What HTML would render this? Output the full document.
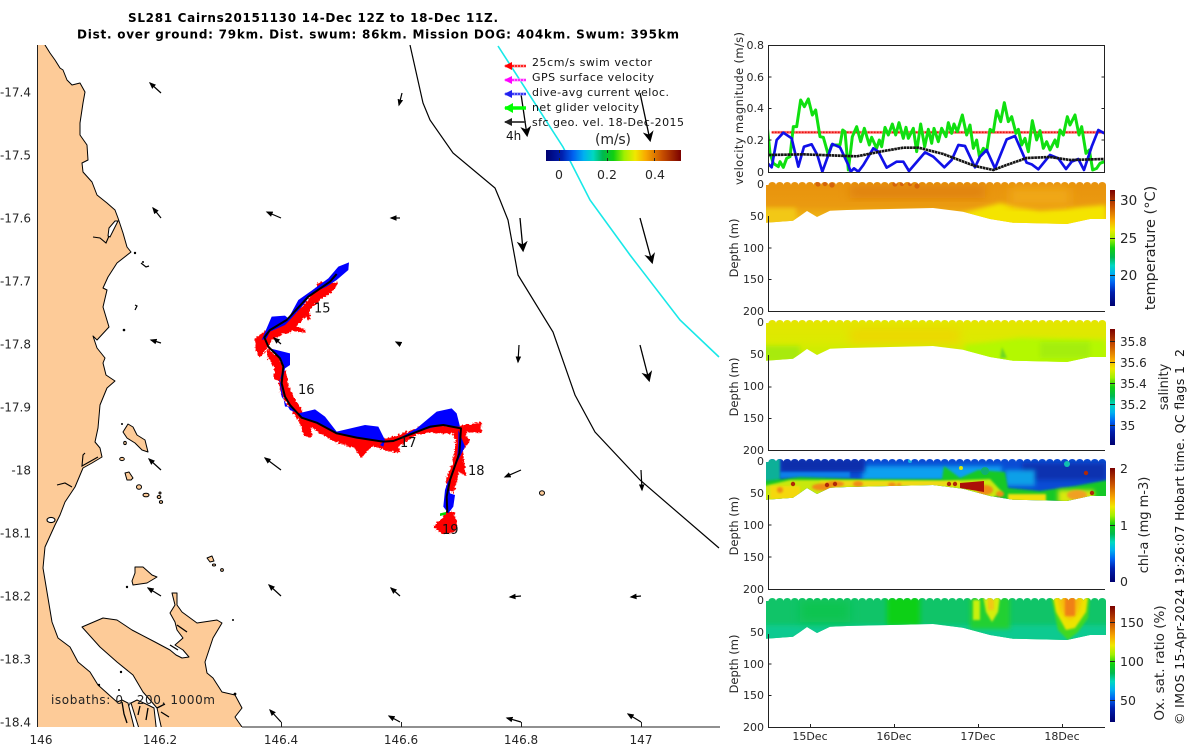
<!DOCTYPE html>
<html><head><meta charset="utf-8"><title>SL281 Cairns20151130</title>
<style>
html,body{margin:0;padding:0;background:#fff}
svg{display:block}
text{font-family:"DejaVu Sans","Liberation Sans",sans-serif;fill:#262626}
.t{font-size:12px}
.s{font-size:11px}
.c{font-size:13.5px}
.l{font-size:11px;fill:#111}
</style></head><body>
<svg xmlns="http://www.w3.org/2000/svg" width="1200" height="750" viewBox="0 0 1200 750">
<defs>
<marker id="a" viewBox="0 0 10 10" refX="8" refY="5" markerWidth="7" markerHeight="7" orient="auto" markerUnits="userSpaceOnUse"><path d="M0,1 L10,5 L0,9 Z" fill="#000"/></marker>
<marker id="b" viewBox="0 0 10 10" refX="8" refY="5" markerWidth="13" markerHeight="11" orient="auto" markerUnits="userSpaceOnUse"><path d="M0,0 L10,5 L0,10 L3,5 Z" fill="#000"/></marker>
<linearGradient id="cm" x1="0" x2="1" y1="0" y2="0">
<stop offset="0" stop-color="#000070"/><stop offset=".12" stop-color="#0020b0"/><stop offset=".2" stop-color="#0060f0"/><stop offset=".28" stop-color="#00b0f0"/><stop offset=".35" stop-color="#00d8c0"/><stop offset=".42" stop-color="#00b850"/><stop offset=".5" stop-color="#10d010"/><stop offset=".58" stop-color="#a0f000"/><stop offset=".66" stop-color="#f0e800"/><stop offset=".74" stop-color="#f8a800"/><stop offset=".86" stop-color="#c85000"/><stop offset="1" stop-color="#7a0000"/>
</linearGradient>
<linearGradient id="cv" x1="0" x2="0" y1="1" y2="0">
<stop offset="0" stop-color="#000070"/><stop offset=".12" stop-color="#0020b0"/><stop offset=".2" stop-color="#0060f0"/><stop offset=".28" stop-color="#00b0f0"/><stop offset=".35" stop-color="#00d8c0"/><stop offset=".42" stop-color="#00b850"/><stop offset=".5" stop-color="#10d010"/><stop offset=".58" stop-color="#a0f000"/><stop offset=".66" stop-color="#f0e800"/><stop offset=".74" stop-color="#f8a800"/><stop offset=".86" stop-color="#c85000"/><stop offset="1" stop-color="#7a0000"/>
</linearGradient>
<linearGradient id="g2" x1="0" x2="0" y1="0" y2="1"><stop offset="0" stop-color="#e8910c"/><stop offset=".55" stop-color="#ea9a10"/><stop offset=".8" stop-color="#f0b612"/><stop offset="1" stop-color="#f2d010"/></linearGradient>
<linearGradient id="g3" x1="0" x2="0" y1="0" y2="1"><stop offset="0" stop-color="#e6e400"/><stop offset=".5" stop-color="#dcea00"/><stop offset="1" stop-color="#b8f200"/></linearGradient>
<filter id="f1" x="-30%" y="-30%" width="160%" height="160%"><feGaussianBlur stdDeviation="1"/></filter>
<filter id="f2" x="-30%" y="-30%" width="160%" height="160%"><feGaussianBlur stdDeviation="2.5"/></filter>
<filter id="f3" x="-30%" y="-30%" width="160%" height="160%"><feGaussianBlur stdDeviation="5"/></filter>
<filter id="rough" x="-10%" y="-10%" width="120%" height="120%"><feTurbulence type="fractalNoise" baseFrequency="0.15" numOctaves="2" seed="4" result="n"/><feDisplacementMap in="SourceGraphic" in2="n" scale="14" xChannelSelector="R" yChannelSelector="G"/></filter>
<path id="ds" d="M766,222.7 L793,220.7 L800,216 L807,211 L817,217 L830,210.7 L847,210 L933,208 L963,211.7 L990,219 L1013,222.7 L1067,224 L1090,219 L1106,219 L1106,185 a3.75,3 0 0 0 -7.5,0 a3.75,3 0 0 0 -7.5,0 a3.75,3 0 0 0 -7.5,0 a3.75,3 0 0 0 -7.5,0 a3.75,3 0 0 0 -7.5,0 a3.75,3 0 0 0 -7.5,0 a3.75,3 0 0 0 -7.5,0 a3.75,3 0 0 0 -7.5,0 a3.75,3 0 0 0 -7.5,0 a3.75,3 0 0 0 -7.5,0 a3.75,3 0 0 0 -7.5,0 a3.75,3 0 0 0 -7.5,0 a3.75,3 0 0 0 -7.5,0 a3.75,3 0 0 0 -7.5,0 a3.75,3 0 0 0 -7.5,0 a3.75,3 0 0 0 -7.5,0 a3.75,3 0 0 0 -7.5,0 a3.75,3 0 0 0 -7.5,0 a3.75,3 0 0 0 -7.5,0 a3.75,3 0 0 0 -7.5,0 a3.75,3 0 0 0 -7.5,0 a3.75,3 0 0 0 -7.5,0 a3.75,3 0 0 0 -7.5,0 a3.75,3 0 0 0 -7.5,0 a3.75,3 0 0 0 -7.5,0 a3.75,3 0 0 0 -7.5,0 a3.75,3 0 0 0 -7.5,0 a3.75,3 0 0 0 -7.5,0 a3.75,3 0 0 0 -7.5,0 a3.75,3 0 0 0 -7.5,0 a3.75,3 0 0 0 -7.5,0 a3.75,3 0 0 0 -7.5,0 a3.75,3 0 0 0 -7.5,0 a3.75,3 0 0 0 -7.5,0 a3.75,3 0 0 0 -7.5,0 a3.75,3 0 0 0 -7.5,0 a3.75,3 0 0 0 -7.5,0 a3.75,3 0 0 0 -7.5,0 a3.75,3 0 0 0 -7.5,0 a3.75,3 0 0 0 -7.5,0 a3.75,3 0 0 0 -7.5,0 a3.75,3 0 0 0 -7.5,0 a3.75,3 0 0 0 -7.5,0 a3.75,3 0 0 0 -7.5,0 a3.75,3 0 0 0 -7.5,0 L766,185 Z"/>
<clipPath id="c2"><use href="#ds"/></clipPath>
<clipPath id="c3"><use href="#ds" transform="translate(0,138)"/></clipPath>
<clipPath id="c4"><use href="#ds" transform="translate(0,277)"/></clipPath>
<clipPath id="c5"><use href="#ds" transform="translate(0,416)"/></clipPath>
<clipPath id="mc"><rect x="37" y="45" width="683" height="682"/></clipPath>
<clipPath id="p1"><rect x="768" y="45" width="337" height="128"/></clipPath>
</defs>
<rect width="1200" height="750" fill="#fff"/>

<text x="128" y="22" font-size="12" font-weight="bold" style="fill:#000" textLength="370" lengthAdjust="spacing">SL281 Cairns20151130 14-Dec 12Z to 18-Dec 11Z.</text>
<text x="77" y="38.5" font-size="12" font-weight="bold" style="fill:#000" textLength="602" lengthAdjust="spacing">Dist. over ground: 79km. Dist. swum: 86km. Mission DOG: 404km. Swum: 395km</text>

<!-- MAP -->
<g clip-path="url(#mc)">
<path fill="#fdcb98" stroke="#000" stroke-width="1" stroke-linejoin="round" d="M30,38 L43,38 L45,45 L50,53 L55,60 L60,68 L63,70 L67,80 L72,85 L80,83 L85,92 L83,103 L80,123 L80,135 L87,145 L88,160 L82,163 L83,172 L92,182 L97,195 L107,203 L115,210 L118,218 L123,233 L127,247 L131,252 L117,263 L108,277 L103,288 L107,290 L103,307 L109,327 L97,340 L93,336 L97,348 L105,358 L103,363 L106,375 L115,381 L107,388 L100,405 L98,428 L95,442 L100,448 L102,457 L92,463 L83,468 L75,487 L65,502 L60,515 L55,525 L45,547 L43,568 L47,592 L52,622 L58,638 L70,647 L78,662 L90,672 L98,685 L117,702 L122,700 L128,703 L136,735 L30,735 Z"/>
<path fill="#fdcb98" stroke="#000" stroke-width="1" stroke-linejoin="round" d="M131,703 L137,700 L146,704 L154,708 L157,735 L141,735 Z"/>
<path fill="#fdcb98" stroke="#000" stroke-width="1" stroke-linejoin="round" d="M82,627 L103,618 L117,620 L132,630 L155,642 L170,650 L176,655 L182,658 L189,657 L183,650 L175,645 L183,638 L177,630 L175,622 L170,613 L175,605 L172,593 L177,593 L177,605 L182,612 L197,623 L217,620 L222,623 L213,638 L205,662 L207,673 L213,678 L222,692 L235,695 L242,708 L235,717 L242,727 L246,735 L163,735 L157,708 L143,692 L133,675 L117,662 L100,647 Z"/>
<path fill="none" stroke="#000" stroke-width="1.3" d="M177,625 L187,632 M138,715 L140,706 M146,720 L148,708 M157,708 L165,704 M161,712 L169,717 M122,702 L124,714 L127,723 M170,645 L178,650"/>
<path fill="#fff" stroke="#000" stroke-width="1" d="M108,236 L109,228 L115,221 L118,221 L114,229 L110,237 Z"/>
<ellipse cx="51" cy="520" rx="4" ry="2.6" fill="#fff" stroke="#000" stroke-width="1.1"/>
<!-- islands -->
<g fill="#fdcb98" stroke="#000" stroke-width="1" stroke-linejoin="round">
<path d="M135,567 L143,567 L152,575 L157,577 L147,583 L133,585 L132,581 L135,573 Z"/>
<path d="M123,432 L128,424 L133,427 L137,435 L145,440 L148,452 L142,450 L135,443 L127,438 Z"/>
<path d="M125,473 L129,472 L133,478 L131,480 L127,480 Z"/>
<path d="M207,558 L212,556 L214,561 L210,562 Z"/>
<ellipse cx="139" cy="487" rx="2.5" ry="2.3"/><ellipse cx="146" cy="495" rx="3" ry="1.8"/>
<ellipse cx="122" cy="459" rx="2.3" ry="1.6"/><ellipse cx="125" cy="443" rx="1.3" ry="1.6"/>
<ellipse cx="159" cy="497" rx="1.8" ry="1.5"/><ellipse cx="161" cy="502" rx="1.6" ry="1.4"/><ellipse cx="160" cy="493" rx="1" ry="1"/>
<ellipse cx="214" cy="565" rx="1.6" ry="1"/><ellipse cx="222" cy="570" rx="1.4" ry="1.4"/>
<ellipse cx="542" cy="493" rx="2.5" ry="2.3"/>
</g>
<path fill="none" stroke="#000" stroke-width="1.1" d="M93,237 L100,238 L106,243 L109,236 M98,457 L82,466 L83,455 L85,453 M57,485 L65,483 L72,487"/>
<path fill="none" stroke="#000" stroke-width="1.2" d="M141,263 L146,267 L149,266 M135,305 L137,306 L135,310"/>
<g fill="#000"><circle cx="135" cy="253" r="1.2"/><circle cx="124" cy="330" r="1.3"/><circle cx="122" cy="424" r="1"/><circle cx="127" cy="587" r="1.2"/><circle cx="233" cy="620" r="1"/><circle cx="121" cy="672" r="1.2"/><circle cx="119" cy="690" r="1"/><circle cx="99" cy="685" r="1.2"/><circle cx="235" cy="694" r="1.4"/><circle cx="143" cy="262" r="1"/></g>

<polyline fill="none" stroke="#000" stroke-width="1.2" points="410,45 423,103 430,120 453,153 495,188 500,200 508,220 518,275 553,332 575,395 595,432 640,480 719,548"/>
<polyline fill="none" stroke="#18e8e8" stroke-width="1.6" points="498,46 563,147 590,200 630,255 680,320 719,357"/>

<!-- track -->
<g transform="translate(240,250) scale(.33333)">
<g fill="#f00" stroke="#f00" stroke-width="6" stroke-linejoin="round" filter="url(#rough)">
<path d="M290,100 L275,125 L235,150 L205,180 L208,205 L195,195 L180,215 L165,225 L195,245 L165,240 L125,250 L100,265 L85,280 L60,320 L50,300 L48,265 L70,250 L95,240 L130,220 L180,180 L225,130 L235,100 Z"/>
<path d="M85,300 L115,325 L125,350 L140,380 L142,410 L160,445 L180,475 L190,500 L215,510 L290,550 L350,560 L430,570 L470,560 L520,540 L575,530 L660,530 L722,520 L722,545 L670,545 L685,575 L665,600 L675,675 L655,660 L640,725 L625,720 L620,690 L640,640 L650,580 L645,550 L575,545 L530,550 L470,590 L478,605 L440,600 L400,585 L380,600 L365,620 L345,590 L290,575 L245,550 L210,525 L212,560 L195,555 L178,510 L155,480 L125,430 L118,390 L105,385 L105,350 L85,320 Z"/>
<path d="M620,785 L640,790 L648,825 L640,845 L610,850 L585,830 L605,810 Z"/>
</g>
<path fill="#00d800" d="M600,790 L618,786 L618,794 L600,798 Z"/>
<g fill="#00f">
<path d="M327,37 L325,60 L290,90 L260,110 L215,130 L190,165 L145,215 L135,225 L90,245 L80,265 L65,270 L95,200 L135,197 L145,205 L175,150 L215,122 L265,85 L295,50 Z"/>
<path d="M90,295 L150,310 L150,345 L135,355 L130,380 L118,390 L125,440 L150,480 L175,490 L225,478 L255,500 L290,545 L375,525 L415,530 L435,570 L430,590 L420,585 L430,575 L350,562 L290,550 L230,520 L185,500 L150,470 L135,470 L120,390 L130,350 L115,320 Z"/>
<path d="M430,590 L450,580 L530,535 L590,485 L635,475 L650,490 L660,530 L600,527 L530,545 L460,575 Z"/>
<path d="M655,540 L675,590 L660,620 L650,640 L655,580 Z"/>
<path d="M625,690 L630,730 L645,735 L640,770 L625,790 L610,770 L615,720 Z"/>
</g>
<polyline fill="none" stroke="#000" stroke-width="6" stroke-linejoin="round" points="290,72 270,95 205,140 140,210 90,240 73,262 85,290 120,325 130,350 125,400 135,440 150,465 185,503 230,518 290,550 350,563 430,575 460,573 570,530 610,525 663,535 658,610 630,690 620,740 622,788"/>
</g>
<text x="314" y="312.500" style="font-size:13px;fill:#111">15</text>
<text x="298" y="394" style="font-size:13px;fill:#111">16</text>
<text x="400" y="447" style="font-size:13px;fill:#111">17</text>
<text x="468" y="475" style="font-size:13px;fill:#111">18</text>
<text x="442" y="534" style="font-size:13px;fill:#111">19</text>

<!-- arrows -->
<g stroke="#000" stroke-width="1.2" fill="none">
<line x1="161" y1="93" x2="150" y2="83" marker-end="url(#a)"/>
<line x1="402" y1="93" x2="399" y2="105" marker-end="url(#a)"/>
<line x1="161" y1="218" x2="153" y2="208" marker-end="url(#a)"/>
<line x1="281" y1="218" x2="267" y2="212" marker-end="url(#a)"/>
<line x1="400" y1="218" x2="391" y2="218" marker-end="url(#a)"/>
<line x1="161" y1="343" x2="151" y2="340" marker-end="url(#a)"/>
<line x1="281" y1="344" x2="274" y2="338" marker-end="url(#a)"/>
<line x1="400" y1="344" x2="396" y2="342" marker-end="url(#a)"/>
<line x1="161" y1="470" x2="149" y2="459" marker-end="url(#a)"/>
<line x1="281" y1="470" x2="265" y2="458" marker-end="url(#a)"/>
<line x1="521" y1="470" x2="505" y2="477" marker-end="url(#a)"/>
<line x1="161" y1="596" x2="148" y2="588" marker-end="url(#a)"/>
<line x1="281" y1="596" x2="269" y2="585" marker-end="url(#a)"/>
<line x1="400" y1="596" x2="391" y2="588" marker-end="url(#a)"/>
<line x1="521" y1="596" x2="510" y2="597" marker-end="url(#a)"/>
<line x1="641" y1="596" x2="631" y2="597" marker-end="url(#a)"/>
<line x1="281" y1="722" x2="270" y2="710" marker-end="url(#a)"/>
<line x1="400" y1="722" x2="389" y2="716" marker-end="url(#a)"/>
<line x1="521" y1="722" x2="507" y2="718" marker-end="url(#a)"/>
<line x1="641" y1="722" x2="628" y2="714" marker-end="url(#a)"/>
<line x1="641" y1="470" x2="642" y2="490" marker-end="url(#a)"/>
<line x1="519" y1="345" x2="518" y2="362" marker-end="url(#a)"/>
</g>
<g stroke="#000" stroke-width="1.3" fill="none">
<line x1="521" y1="94" x2="527" y2="135" marker-end="url(#b)"/>
<line x1="640" y1="93" x2="650" y2="140" marker-end="url(#b)"/>
<line x1="520" y1="218" x2="523" y2="250" marker-end="url(#b)"/>
<line x1="640" y1="218" x2="652" y2="262" marker-end="url(#b)"/>
<line x1="640" y1="345" x2="649" y2="380" marker-end="url(#b)"/>
</g>
</g>
<line x1="37.5" y1="45" x2="37.500" y2="727" stroke="#222" stroke-width="1"/>
<line x1="242" y1="727" x2="720" y2="727" stroke="#222" stroke-width="1"/>

<!-- legend -->
<g stroke-width="1.6" fill="none">
<line x1="526" y1="66" x2="505" y2="66" stroke="#ff9090" stroke-width="3"/><line x1="526" y1="66" x2="505" y2="66" stroke="#f00" stroke-dasharray="2 1"/><path d="M512,62 L504,66 L512,70 Z" fill="#f00"/>
<line x1="526" y1="80" x2="505" y2="80" stroke="#ff90ff" stroke-width="3"/><line x1="526" y1="80" x2="505" y2="80" stroke="#f0f" stroke-dasharray="2 1"/><path d="M512,76 L504,80 L512,84 Z" fill="#f0f"/>
<line x1="526" y1="94" x2="505" y2="94" stroke="#9090ff" stroke-width="3"/><line x1="526" y1="94" x2="505" y2="94" stroke="#2020f0" stroke-dasharray="2 1"/><path d="M512,90 L504,94 L512,98 Z" fill="#2020f0"/>
<line x1="526" y1="108" x2="505" y2="108" stroke="#0f0" stroke-width="3.4"/><path d="M513,103 L504,108 L513,113 Z" fill="#0f0"/>
<line x1="526" y1="122" x2="505" y2="122" stroke="#333" stroke-width="1.8"/><path d="M512,118 L504,122 L512,126 Z" fill="#222"/>
</g>
<text class="l" x="532" y="66" textLength="120">25cm/s swim vector</text>
<text class="l" x="532" y="81" textLength="122">GPS surface velocity</text>
<text class="l" x="532" y="96" textLength="137">dive-avg current veloc.</text>
<text class="l" x="532" y="111" textLength="107">net glider velocity</text>
<text class="l" x="532" y="126" textLength="152">sfc geo. vel. 18-Dec-2015</text>
<text x="506" y="140" style="font-size:12px;fill:#111">4h</text>
<text x="595" y="144" style="font-size:14px" textLength="36">(m/s)</text>
<rect x="546" y="150" width="135" height="11" fill="url(#cm)"/>
<path d="M559.5,150v3M559.5,161v-3M607.5,150v3M607.5,161v-3M654.5,150v3M654.5,161v-3" stroke="#222" stroke-width="1"/>
<g text-anchor="middle">
<text x="559" y="179" style="font-size:12.5px">0</text><text x="607" y="179" style="font-size:12.5px">0.2</text><text x="655" y="179" style="font-size:12.5px">0.4</text>
</g>

<!-- map ticks -->
<g text-anchor="end">
<text class="t" x="31" y="96.5">-17.4</text><text class="t" x="31" y="159.5">-17.5</text><text class="t" x="31" y="222.5">-17.6</text><text class="t" x="31" y="285.5">-17.7</text><text class="t" x="31" y="348.5">-17.8</text><text class="t" x="31" y="411.5">-17.9</text><text class="t" x="31" y="474.5">-18</text><text class="t" x="31" y="537.5">-18.1</text><text class="t" x="31" y="600.5">-18.2</text><text class="t" x="31" y="663.5">-18.3</text><text class="t" x="31" y="726.5">-18.4</text>
</g>
<g text-anchor="middle">
<text class="t" x="41" y="744">146</text><text class="t" x="160" y="744">146.2</text><text class="t" x="281" y="744">146.4</text><text class="t" x="401" y="744">146.6</text><text class="t" x="521" y="744">146.8</text><text class="t" x="641" y="744">147</text>
</g>
<text x="51" y="704" style="font-size:12px;fill:#222" textLength="164">isobaths: 0 , 200, 1000m</text>
<path d="M281.5,727v-5M401.5,727v-5M521.5,727v-5M641.5,727v-5" stroke="#222"/>

<!-- panel 1 -->
<g clip-path="url(#p1)"><g transform="translate(730,30) scale(.33333)" fill="none" stroke-linejoin="round">
<line x1="125" y1="307" x2="1123" y2="307" stroke="#ff9090" stroke-width="9"/>
<line x1="125" y1="307" x2="1123" y2="307" stroke="#e81010" stroke-width="5" stroke-dasharray="6 3"/>
<polyline stroke="#10e010" stroke-width="9" points="112,292 120,370 130,400 145,410 150,395 160,412 170,385 180,380 190,290 200,290 212,210 223,230 235,207 247,255 257,240 270,320 280,322 295,375 305,345 320,345 330,345 338,300 345,305 355,420 367,320 380,290 392,335 403,295 418,345 425,322 440,355 448,330 455,350 465,292 475,315 487,282 497,315 507,278 520,325 528,292 535,325 550,295 560,365 572,282 584,350 595,298 605,340 612,295 625,335 635,295 648,320 655,278 665,310 672,282 682,305 697,255 710,315 720,285 730,355 740,330 748,378 760,355 770,365 780,298 790,305 800,242 812,275 823,218 835,275 845,260 858,310 865,298 875,345 885,325 895,365 907,272 920,330 930,302 940,355 950,335 960,360 975,330 982,350 990,300 1000,315 1012,260 1020,285 1035,255 1047,315 1055,290 1068,370 1078,360 1088,420 1100,415 1110,400 1123,395"/>
<polyline stroke="#1010e8" stroke-width="8" points="113,400 125,412 140,330 160,308 185,325 205,410 222,350 245,343 262,375 277,425 307,342 330,352 355,405 362,425 372,415 385,425 400,405 430,355 445,365 470,413 500,395 520,395 537,423 585,367 610,380 643,412 665,390 685,345 705,348 735,412 750,380 770,360 795,415 830,328 855,318 890,398 905,403 925,418 960,375 985,385 1008,417 1025,395 1045,387 1062,420 1085,350 1105,300 1123,310"/>
<polyline stroke="#151515" stroke-width="8" stroke-dasharray="8 1.500" points="115,375 220,373 300,376 380,379 450,365 520,353 565,353 640,372 700,395 735,408 790,420 830,405 890,384 960,381 1020,390 1123,387"/>
</g></g>
<rect x="768.5" y="45.5" width="336" height="127" fill="none" stroke="#222"/>
<path d="M768.5,77h3M768.5,108.500h3M768.5,140h3M1104.500,77h-3M1104.500,108.500h-3M1104.500,140h-3" stroke="#222"/>
<g text-anchor="end">
<text class="s" x="764" y="49">0.8</text><text class="s" x="764" y="81">0.6</text><text class="s" x="764" y="112">0.4</text><text class="s" x="764" y="144">0.2</text><text class="s" x="764" y="176">0</text>
</g>
<text transform="translate(743,185) rotate(-90)" style="font-size:11.5px" textLength="153">velocity magnitude (m/s)</text>

<!-- panel 2: temperature -->
<g clip-path="url(#c2)">
<rect x="764" y="178" width="344" height="50" fill="url(#g2)"/>
<path d="M960,214 L1000,203 L1040,211 L1106,205 L1106,228 L960,228 Z" fill="#f4e400" filter="url(#f2)"/>
<rect x="760" y="208" width="36" height="18" fill="#f2c814" filter="url(#f2)"/>
<rect x="850" y="185" width="135" height="13" fill="#e0820a" filter="url(#f3)"/>
<rect x="1010" y="188" width="60" height="18" fill="#f0a812" filter="url(#f3)"/>
<g fill="#d4640a"><circle cx="818" cy="184" r="2.6"/><circle cx="825" cy="184" r="2.2"/><circle cx="832" cy="185" r="2.6"/><circle cx="895" cy="184" r="2.6"/><circle cx="902" cy="184" r="2.2"/><circle cx="910" cy="184" r="2.2"/><circle cx="917" cy="186" r="2.6"/></g>
</g>
<path d="M768.5,216V311.500H1105" fill="none" stroke="#222"/>
<path d="M768.5,248h3M768.5,279.500h3" stroke="#222"/>

<!-- panel 3: salinity -->
<g clip-path="url(#c3)">
<rect x="764" y="316" width="344" height="50" fill="url(#g3)"/>
<rect x="850" y="328" width="110" height="16" fill="#ecd800" filter="url(#f3)"/>
<path d="M965,345 L1020,338 L1106,340 L1106,368 L965,368 Z" fill="#b4f800" filter="url(#f2)"/>
<rect x="1040" y="342" width="50" height="16" fill="#a4ee10" filter="url(#f2)"/>
<path d="M1000,358 L1002,347 L1007,358 Z" fill="#70d820" filter="url(#f1)"/>
<rect x="760" y="346" width="40" height="16" fill="#a8ea10" filter="url(#f2)"/>
</g>
<path d="M768.5,355V450.500H1105" fill="none" stroke="#222"/>
<path d="M768.5,387h3M768.5,418.500h3" stroke="#222"/>

<!-- panel 4: chl -->
<g clip-path="url(#c4)">
<rect x="764" y="455" width="344" height="50" fill="#0a4cd4"/>
<rect x="862" y="466" width="140" height="15" fill="#10a0f0" filter="url(#f2)"/>
<rect x="780" y="458" width="85" height="14" fill="#0a2eac" filter="url(#f2)"/>
<rect x="1022" y="463" width="84" height="17" fill="#0a30b0" filter="url(#f2)"/>
<rect x="780" y="472" width="70" height="6" fill="#1080e8" filter="url(#f1)"/>
<rect x="1005" y="470" width="30" height="16" fill="#10a0e8" filter="url(#f2)"/>
<rect x="764" y="458" width="16" height="24" fill="#10b098" filter="url(#f1)"/>
<path d="M764,481 L800,477 L860,479 L942,479 L944,466 L960,478 L978,470 L1005,472 L1008,488 L1040,491 L1075,486 L1108,480 L1108,505 L764,505 Z" fill="#14c828" filter="url(#f1)"/>
<path d="M764,486 L790,480 L850,480 L940,481 L990,479 L1002,492 L990,500 L1005,505 L764,505 Z" fill="#c8e810" filter="url(#f1)"/>
<rect x="1008" y="494" width="38" height="8" fill="#f4e010" filter="url(#f1)"/>
<rect x="1058" y="490" width="36" height="14" fill="#d8e810" filter="url(#f2)"/>
<rect x="770" y="486" width="30" height="13" fill="#f4d810" filter="url(#f1)"/>
<rect x="820" y="481" width="140" height="5" fill="#f0d818" filter="url(#f1)"/>
<g fill="#f08c18" filter="url(#f1)">
<ellipse cx="822" cy="487" rx="10" ry="3.5"/><ellipse cx="835" cy="484" rx="9" ry="3"/><ellipse cx="858" cy="484" rx="5" ry="3"/><ellipse cx="892" cy="485" rx="4" ry="2.5"/><ellipse cx="899" cy="485" rx="2" ry="2"/>
<ellipse cx="985" cy="490" rx="8" ry="5"/><ellipse cx="1077" cy="495" rx="10" ry="5" fill="#f0a020"/><ellipse cx="1000" cy="494" rx="4" ry="3"/>
<ellipse cx="780" cy="490" rx="3" ry="3"/>
</g>
<g fill="#b02808">
<path d="M960,483 L984,481 L984,492 L960,488 Z" fill="#ac1008"/>
<circle cx="793" cy="484" r="2.2"/><circle cx="827" cy="485" r="2.2"/><circle cx="835" cy="484" r="2.2"/><circle cx="949" cy="484" r="2.2"/><circle cx="955" cy="484" r="2.2"/><circle cx="1086" cy="473" r="2.2"/><circle cx="1092" cy="493" r="2.2"/>
</g>
<circle cx="961" cy="468" r="2" fill="#d8e810"/>
<circle cx="985" cy="471" r="4" fill="#10b070"/>
<circle cx="1067" cy="464" r="3" fill="#10c0b0"/>
<circle cx="910" cy="461" r="2" fill="#10b0e0"/>
</g>
<path d="M768.5,495V589.500H1105" fill="none" stroke="#222"/>
<path d="M768.5,525h3M768.5,557h3" stroke="#222"/>

<!-- panel 5: oxygen -->
<g clip-path="url(#c5)">
<rect x="764" y="594" width="344" height="50" fill="#10c468"/>
<rect x="764" y="625" width="344" height="18" fill="#10ca90" filter="url(#f2)"/>
<rect x="800" y="600" width="50" height="22" fill="#0cc450" filter="url(#f3)"/>
<rect x="887" y="596" width="33" height="30" fill="#08d018" filter="url(#f2)"/>
<rect x="970" y="597" width="40" height="32" fill="#20d030" filter="url(#f2)"/>
<rect x="973" y="600" width="7" height="20" fill="#c8f010" filter="url(#f1)"/>
<path d="M983,596 L1000,596 L998,612 L992,622 L986,612 Z" fill="#d4ee10" filter="url(#f1)"/>
<rect x="988" y="598" width="6" height="12" fill="#f0c818" filter="url(#f1)"/>
<path d="M1051,596 L1090,596 L1088,618 L1078,632 L1068,640 L1058,630 Z" fill="#40d820" filter="url(#f1)"/>
<path d="M1053,596 L1088,596 L1086,612 L1075,628 L1066,630 L1056,612 Z" fill="#ece400" filter="url(#f1)"/>
<path d="M1058,596 L1082,596 L1078,612 L1070,620 L1062,612 Z" fill="#f8b810" filter="url(#f2)"/>
<rect x="1065" y="596" width="10" height="20" fill="#f08018" filter="url(#f1)"/>
</g>
<path d="M768.5,634V727.500H1105" fill="none" stroke="#222"/>
<path d="M768.5,664h3M768.5,695.500h3M810.500,727v-3M894.500,727v-3M978.500,727v-3M1062.500,727v-3" stroke="#222"/>

<!-- depth labels -->
<g text-anchor="end">
<text class="s" x="764" y="188">0</text><text class="s" x="764" y="220">50</text><text class="s" x="764" y="252">100</text><text class="s" x="764" y="283">150</text><text class="s" x="764" y="315">200</text>
<text class="s" x="764" y="326">0</text><text class="s" x="764" y="358">50</text><text class="s" x="764" y="390">100</text><text class="s" x="764" y="422">150</text><text class="s" x="764" y="454">200</text>
<text class="s" x="764" y="465">0</text><text class="s" x="764" y="497">50</text><text class="s" x="764" y="529">100</text><text class="s" x="764" y="561">150</text><text class="s" x="764" y="593">200</text>
<text class="s" x="764" y="604">0</text><text class="s" x="764" y="636">50</text><text class="s" x="764" y="668">100</text><text class="s" x="764" y="699">150</text><text class="s" x="764" y="731">200</text>
</g>
<g text-anchor="middle">
<text transform="translate(738,248) rotate(-90)" style="font-size:11.5px">Depth (m)</text>
<text transform="translate(738,387) rotate(-90)" style="font-size:11.5px">Depth (m)</text>
<text transform="translate(738,526) rotate(-90)" style="font-size:11.5px">Depth (m)</text>
<text transform="translate(738,664) rotate(-90)" style="font-size:11.5px">Depth (m)</text>
<text class="s" x="810" y="740">15Dec</text><text class="s" x="894" y="740">16Dec</text><text class="s" x="978" y="740">17Dec</text><text class="s" x="1062" y="740">18Dec</text>
</g>

<!-- colorbars -->
<rect x="1110" y="190" width="5" height="116" fill="url(#cv)"/>
<rect x="1110" y="329" width="5" height="116" fill="url(#cv)"/>
<rect x="1110" y="468" width="5" height="114" fill="url(#cv)"/>
<rect x="1110" y="606" width="5" height="116" fill="url(#cv)"/>
<path d="M1110,200.500h5M1110,238.500h5M1110,275.500h5M1110,341.500h5M1110,362.500h5M1110,383.500h5M1110,404.500h5M1110,425.500h5M1110,525.500h5M1110,622.500h5M1110,661.500h5M1110,700.500h5" stroke="#222"/>
<text class="c" x="1120" y="205">30</text><text class="c" x="1120" y="243">25</text><text class="c" x="1120" y="280">20</text>
<text style="font-size:12px" x="1120" y="346">35.8</text><text style="font-size:12px" x="1120" y="367">35.6</text><text style="font-size:12px" x="1120" y="388">35.4</text><text style="font-size:12px" x="1120" y="409">35.2</text><text style="font-size:12px" x="1120" y="430">35</text>
<text style="font-size:12.5px" x="1120" y="473">2</text><text style="font-size:12.5px" x="1120" y="530">1</text><text style="font-size:12.5px" x="1120" y="586">0</text>
<text style="font-size:12.5px" x="1120" y="627">150</text><text style="font-size:12.5px" x="1120" y="666">100</text><text style="font-size:12.5px" x="1120" y="705">50</text>
<g text-anchor="middle">
<text transform="translate(1155,248) rotate(-90)" style="font-size:14.5px">temperature (°C)</text>
<text transform="translate(1168,387) rotate(-90)" style="font-size:13px">salinity</text>
<text transform="translate(1148,525) rotate(-90)" style="font-size:13px">chl-a (mg m-3)</text>
<text transform="translate(1164,663) rotate(-90)" style="font-size:13.5px">Ox. sat. ratio (%)</text>
</g>
<text transform="translate(1184,725) rotate(-90)" style="font-size:12.5px;fill:#111" textLength="376" xml:space="preserve">© IMOS 15-Apr-2024 19:26:07 Hobart time. QC flags 1  2</text>
</svg>
</body></html>
